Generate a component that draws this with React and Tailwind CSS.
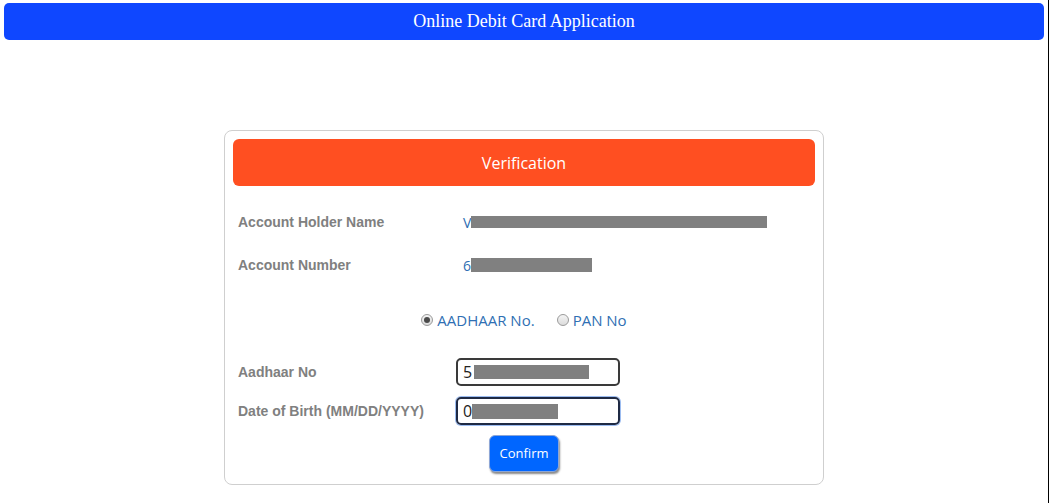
const Redact = ({ w, h, className = "" }) => (
  <span
    className={`inline-block bg-[#808080] align-middle ${className}`}
    style={{ width: w, height: h }}
  />
);

const Radio = ({ checked }) => (
  <span className="inline-flex h-[12px] w-[12px] items-center justify-center rounded-full border border-[#9a9a9a] bg-gradient-to-b from-[#f4f4f4] to-[#dcdcdc]">
    {checked && <span className="h-[6px] w-[6px] rounded-full bg-[#4a4a4a]" />}
  </span>
);

export default function App() {
  const label = "w-[223px] pl-[5px] text-[14px] font-bold text-[#808080]";
  return (
    <div className="flex min-h-[503px] w-[1051px] bg-white" style={{ fontFamily: "Arial, 'Liberation Sans', sans-serif" }}>
      <div className="w-[1048px] px-[4px] pt-[3px]">
        <div className="flex h-[37px] items-center justify-center rounded-[5px] bg-[#0f47ff] text-[18px] text-white" style={{ fontFamily: "'Liberation Serif', 'Times New Roman', serif" }}>
          Online Debit Card Application
        </div>

        <div className="mx-auto mt-[90px] w-[600px] rounded-[8px] border border-[#cfcfcf] p-2 pb-[12px]">
          <div className="flex h-[47px] items-center justify-center rounded-[6px] bg-[#ff4f21] text-[16px] text-white" style={{ fontFamily: "'Open Sans', sans-serif" }}>
            Verification
          </div>

          <div className="mt-[14px] flex h-[44px] items-center">
            <div className={label}>Account Holder Name</div>
            <div className="flex items-center pl-[7px] text-[14px] text-[#2f6fb3]" style={{ fontFamily: "'Open Sans', sans-serif" }}>
              <span>V</span>
              <Redact w={296} h={12} />
            </div>
          </div>

          <div className="flex h-[42px] items-center">
            <div className={label}>Account Number</div>
            <div className="flex items-center pl-[7px] text-[14px] text-[#2f6fb3]" style={{ fontFamily: "'Open Sans', sans-serif" }}>
              <span>6</span>
              <Redact w={121} h={14} />
            </div>
          </div>

          <div className="mt-[14px] flex h-[40px] items-center justify-center text-[15px] text-[#2f6fb3]" style={{ fontFamily: "'Open Sans', sans-serif" }}>
            <label className="flex items-center gap-[4px]">
              <Radio checked />
              <span>AADHAAR No.</span>
            </label>
            <label className="ml-[22px] flex items-center gap-[4px]">
              <Radio />
              <span>PAN No</span>
            </label>
          </div>

          <div className="mt-[18px] flex items-center">
            <div className={label}>Aadhaar No</div>
            <div className="flex h-[28px] w-[164px] items-center rounded-[5px] border-2 border-[#3a3a3a] pl-[5px] text-[16px] text-[#222]" style={{ fontFamily: "'Open Sans', sans-serif" }}>
              <span>5</span>
              <Redact w={115} h={14} className="ml-[2px]" />
            </div>
          </div>

          <div className="mt-[11px] flex items-center">
            <div className={label}>Date of Birth (MM/DD/YYYY)</div>
            <div className="flex h-[28px] w-[164px] items-center rounded-[5px] border-2 border-[#1f2a44] pl-[5px] text-[16px] text-[#222] shadow-[0_0_0_1px_#9cbcf0]" style={{ fontFamily: "'Open Sans', sans-serif" }}>
              <span>0</span>
              <Redact w={86} h={15} />
            </div>
          </div>

          <div className="mt-[10px] flex justify-center">
            <button className="h-[37px] w-[70px] rounded-[6px] border border-[#8da6d6] bg-[#0066ff] text-[13px] text-white shadow-[1px_2px_2px_#8a8a8a]" style={{ fontFamily: "'Open Sans', sans-serif" }}>
              Confirm
            </button>
          </div>
        </div>
      </div>
      <div className="w-px bg-black" />
      <div className="w-[2px]" />
    </div>
  );
}
